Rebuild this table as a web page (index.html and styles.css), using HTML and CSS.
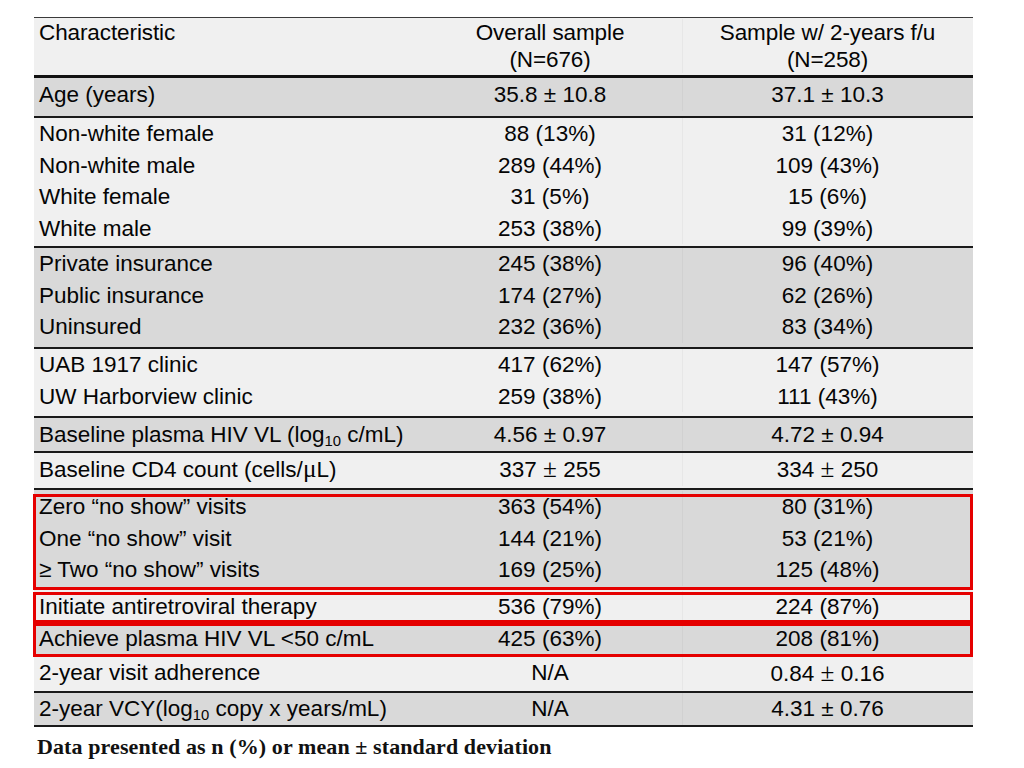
FILE: index.html
```html
<!DOCTYPE html>
<html>
<head>
<meta charset="utf-8">
<link rel="stylesheet" href="styles.css">
</head>
<body>
<div class="page">
  <div class="tbl">
    <div class="grp light head">
      <div>Characteristic</div>
      <div>Overall sample<br>(N=676)</div>
      <div>Sample w/ 2-years f/u<br>(N=258)</div>
    </div>
    <div class="grp dark age">
      <div>Age (years)</div><div>35.8 ± 10.8</div><div>37.1 ± 10.3</div>
    </div>
    <div class="grp light demo">
      <div>Non-white female</div><div>88 (13%)</div><div>31 (12%)</div>
      <div>Non-white male</div><div>289 (44%)</div><div>109 (43%)</div>
      <div>White female</div><div>31 (5%)</div><div>15 (6%)</div>
      <div>White male</div><div>253 (38%)</div><div>99 (39%)</div>
    </div>
    <div class="grp dark ins">
      <div>Private insurance</div><div>245 (38%)</div><div>96 (40%)</div>
      <div>Public insurance</div><div>174 (27%)</div><div>62 (26%)</div>
      <div>Uninsured</div><div>232 (36%)</div><div>83 (34%)</div>
    </div>
    <div class="grp light clinic">
      <div>UAB 1917 clinic</div><div>417 (62%)</div><div>147 (57%)</div>
      <div>UW Harborview clinic</div><div>259 (38%)</div><div>111 (43%)</div>
    </div>
    <div class="grp dark vl">
      <div>Baseline plasma HIV VL (log<sub>10</sub> c/mL)</div><div>4.56 ± 0.97</div><div>4.72 ± 0.94</div>
    </div>
    <div class="grp light cd4">
      <div>Baseline CD4 count (cells/<span class="sym">μ</span>L)</div><div>337 <span class="sym">±</span> 255</div><div>334 <span class="sym">±</span> 250</div>
    </div>
    <div class="grp dark noshow box">
      <div>Zero “no show” visits</div><div>363 (54%)</div><div>80 (31%)</div>
      <div>One “no show” visit</div><div>144 (21%)</div><div>53 (21%)</div>
      <div>≥ Two “no show” visits</div><div>169 (25%)</div><div>125 (48%)</div>
    </div>
    <div class="grp light art box">
      <div>Initiate antiretroviral therapy</div><div>536 (79%)</div><div>224 (87%)</div>
    </div>
    <div class="grp dark vls box">
      <div>Achieve plasma HIV VL &lt;50 c/mL</div><div>425 (63%)</div><div>208 (81%)</div>
    </div>
    <div class="grp light adh">
      <div>2-year visit adherence</div><div>N/A</div><div>0.84 <span class="sym">±</span> 0.16</div>
    </div>
    <div class="grp dark vcy">
      <div>2-year VCY(log<sub>10</sub> copy x years/mL)</div><div>N/A</div><div>4.31 ± 0.76</div>
    </div>
  </div>
  <p class="note">Data presented as n (%) or mean ± standard deviation</p>
</div>
</body>
</html>
```

FILE: styles.css
```css
html, body {
  margin: 0;
  padding: 0;
  background: #ffffff;
}

.page {
  padding: 17px 0 0 34px;
  font-family: "Liberation Sans", Arial, sans-serif;
  font-size: 22.5px;
  color: #050505;
}

.tbl {
  width: 939px;
  border-top: 1px solid #3a3a3a;
}

.grp {
  display: grid;
  grid-template-columns: 384px 264px 291px;
  align-content: start;
  box-sizing: border-box;
  line-height: 31.5px;
  border-bottom: 2px solid #1a1a1a;
  position: relative;
}

.grp > div {
  text-align: center;
  white-space: nowrap;
}

.grp > div:nth-child(3n+1) {
  text-align: left;
  padding-left: 5px;
}

.grp > div:nth-child(3n) {
  box-shadow: inset 1px 0 0 rgba(0, 0, 0, 0.035);
}

.light { background: #f0f0f0; }
.dark { background: #d9d9d9; }

.head {
  height: 60px;
  line-height: 27px;
  padding-top: 1px;
  border-bottom: 3px solid #111111;
  letter-spacing: -0.1px;
}

.age { height: 40px; padding-top: 1px; }
.demo { height: 130px; }
.ins { height: 101px; }
.clinic { height: 69px; }
.vl { height: 35px; padding-top: 1px; }
.cd4 { height: 37px; }
.noshow { height: 100px; padding-top: 1px; border-bottom: none; }
.art { height: 33px; padding-top: 1px; border-bottom: none; }
.vls { height: 34px; }
.adh { height: 36px; }
.vcy { height: 34px; }

sub {
  font-size: 0.66em;
  vertical-align: -0.3em;
  line-height: 0;
}

.sym {
  font-family: "Liberation Serif", "Times New Roman", serif;
  font-size: 1.12em;
}

.box::after {
  content: "";
  position: absolute;
  left: -1px;
  right: 0;
  top: 0;
  bottom: 0;
  border: 3px solid #e50000;
  pointer-events: none;
}

.noshow::after { top: 4px; }
.art::after { top: 2px; }
.vls::after { bottom: -2px; }

.note {
  margin: 8px 0 0 3px;
  font-family: "Liberation Serif", "Times New Roman", serif;
  font-weight: bold;
  font-size: 22px;
  line-height: 24px;
  letter-spacing: 0.1px;
  color: #111111;
}
```
